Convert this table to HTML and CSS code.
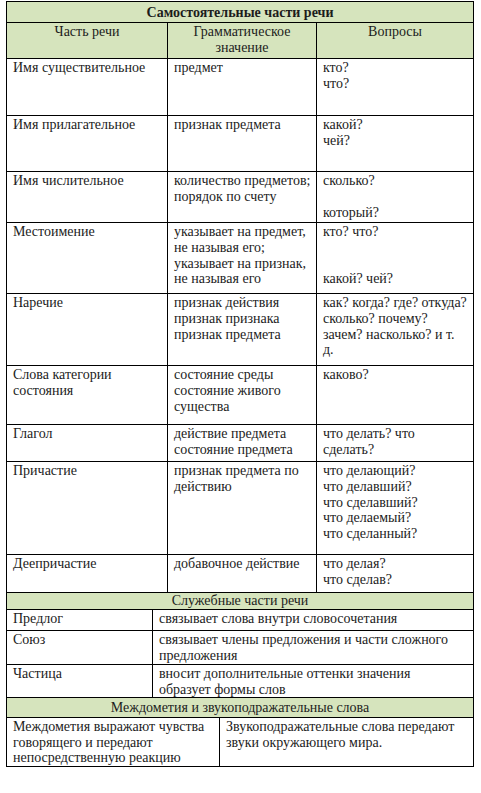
FILE: index.html
```html
<!DOCTYPE html>
<html>
<head>
<meta charset="utf-8">
<title>Части речи</title>
<link rel="stylesheet" href="styles.css">
</head>
<body>
<div class="sheet">
  <table class="t main">
    <colgroup><col class="m1"><col class="m2"><col class="m3"></colgroup>
    <tr class="band title"><th colspan="3">Самостоятельные части речи</th></tr>
    <tr class="band head"><th>Часть речи</th><th>Грамматическое<br>значение</th><th>Вопросы</th></tr>
    <tr class="r-noun"><td>Имя существительное</td><td>предмет</td><td>кто?<br>что?</td></tr>
    <tr class="r-adj"><td>Имя прилагательное</td><td>признак предмета</td><td>какой?<br>чей?</td></tr>
    <tr class="r-num"><td>Имя числительное</td><td>количество предметов;<br>порядок по счету</td><td>сколько?<br><br>который?</td></tr>
    <tr class="r-pron"><td>Местоимение</td><td>указывает на предмет,<br>не называя его;<br>указывает на признак,<br>не называя его</td><td>кто? что?<br><br><br>какой? чей?</td></tr>
    <tr class="r-adv"><td>Наречие</td><td>признак действия<br>признак признака<br>признак предмета</td><td>как? когда? где? откуда?<br>сколько? почему?<br>зачем? насколько? и т.<br>д.</td></tr>
    <tr class="r-state"><td>Слова категории<br>состояния</td><td>состояние среды<br>состояние живого<br>существа</td><td>каково?</td></tr>
    <tr class="r-verb"><td>Глагол</td><td>действие предмета<br>состояние предмета</td><td>что делать? что<br>сделать?</td></tr>
    <tr class="r-part"><td>Причастие</td><td>признак предмета по<br>действию</td><td>что делающий?<br>что делавший?<br>что сделавший?<br>что делаемый?<br>что сделанный?</td></tr>
    <tr class="r-ger"><td>Деепричастие</td><td>добавочное действие</td><td>что делая?<br>что сделав?</td></tr>
  </table>
  <table class="t service">
    <colgroup><col class="s1"><col class="s2"></colgroup>
    <tr class="band sub"><th colspan="2">Служебные части речи</th></tr>
    <tr class="r-prep"><td>Предлог</td><td>связывает слова внутри словосочетания</td></tr>
    <tr class="r-conj"><td>Союз</td><td>связывает члены предложения и части сложного<br>предложения</td></tr>
    <tr class="r-ptcl"><td>Частица</td><td>вносит дополнительные оттенки значения<br>образует формы слов</td></tr>
  </table>
  <table class="t interj">
    <colgroup><col class="i1"><col class="i2"></colgroup>
    <tr class="band sub2"><th colspan="2">Междометия и звукоподражательные слова</th></tr>
    <tr class="r-last"><td>Междометия выражают чувства<br>говорящего и передают<br>непосредственную реакцию</td><td>Звукоподражательные слова передают<br>звуки окружающего мира.</td></tr>
  </table>
</div>
</body>
</html>
```
FILE: styles.css
```css
html, body {
  margin: 0;
  padding: 0;
  background: #ffffff;
}

body {
  padding: 1px 0 0 6px;
  color: #1c1c1c;
}

.sheet {
  display: flex;
  flex-direction: column;
  width: 467px;
}

.t {
  border-collapse: collapse;
  table-layout: fixed;
  width: 467px;
}

.t td,
.t th {
  font-family: Tinos, serif;
  font-size: 14px;
  line-height: 15.8px;
  border: 1px solid #000;
  padding: 1px 2px 0 6px;
  vertical-align: top;
  text-align: left;
  font-weight: normal;
  white-space: nowrap;
  overflow: visible;
}

.band th {
  background: #d6e4bd;
  text-align: center;
  padding-left: 0;
  padding-right: 0;
}

.title th {
  font-weight: bold;
  vertical-align: middle;
}

.sub th,
.sub2 th {
  vertical-align: middle;
  padding-top: 0;
}

.service tr:first-child th,
.interj tr:first-child th {
  border-top: none;
}

.m1 { width: 161px; }
.m2 { width: 149px; }
.m3 { width: 157px; }
.s1 { width: 146px; }
.s2 { width: 321px; }
.i1 { width: 213px; }
.i2 { width: 254px; }

.title { height: 21px; }
.head { height: 36px; }
.r-noun { height: 57px; }
.r-adj { height: 56px; }
.r-num { height: 51px; }
.r-pron { height: 71px; }
.r-adv { height: 72px; }
.r-state { height: 59px; }
.r-verb { height: 37px; }
.r-part { height: 93px; }
.r-ger { height: 38px; }
.sub { height: 16px; }
.r-prep { height: 21px; }
.r-conj { height: 34px; }
.r-ptcl { height: 32px; }
.sub2 { height: 19px; }
.r-last { height: 48px; }
```
